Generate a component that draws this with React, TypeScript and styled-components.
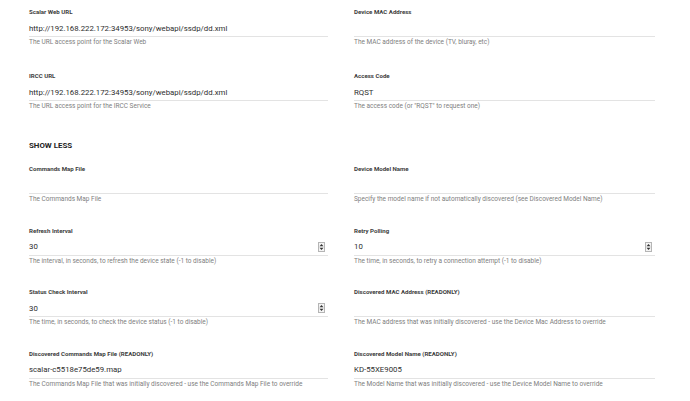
import React from "react";
import styled, { createGlobalStyle } from "styled-components";

const Global = createGlobalStyle`
  html, body { margin: 0; padding: 0; background: #fff; }
  body { font-family: Roboto, "Liberation Sans", Arial, sans-serif; color: #333; }
`;

const Page = styled.div`
  padding: 7px 0 0 29px;
  width: 661px;
  box-sizing: border-box;
`;

const Grid = styled.div<{ $rowGap: number }>`
  display: grid;
  grid-template-columns: 299px 301px;
  column-gap: 26px;
  row-gap: ${(p) => p.$rowGap}px;
`;

const Field = styled.div`
  display: flex;
  flex-direction: column;
`;

const Label = styled.div`
  font-size: 6.1px;
  font-weight: 700;
  line-height: 10px;
  height: 10px;
  color: #3d3d3d;
  white-space: nowrap;
`;

const InputRow = styled.div`
  display: flex;
  align-items: center;
  padding-top: 3px;
  box-sizing: border-box;
  border-bottom: 1px solid #e3e3e3;
  height: 20px;
`;

const Value = styled.div`
  flex: 1;
  font-size: 7.8px;
  line-height: 15px;
  color: #2e2e2e;
  white-space: nowrap;
`;

const Help = styled.div`
  margin-top: 1px;
  font-size: 6.5px;
  line-height: 9px;
  color: #808080;
  white-space: nowrap;
`;

const SpinBox = styled.span`
  display: inline-flex;
  width: 7px;
  height: 10px;
  margin-right: 3px;
`;

const ShowLess = styled.div`
  margin: 30px 0 13px;
  font-size: 7.9px;
  font-weight: 700;
  line-height: 10px;
  color: #222;
`;

const Spinner = () => (
  <SpinBox>
    <svg width="7" height="10" viewBox="0 0 7 10">
      <rect x="0.5" y="0.5" width="6" height="9" fill="#f4f4f4" stroke="#b5b5b5" />
      <path d="M3.5 2 L5.5 4.3 H1.5 Z" fill="#333" />
      <path d="M3.5 8 L5.5 5.7 H1.5 Z" fill="#333" />
    </svg>
  </SpinBox>
);

type F = { label: string; value?: string; help: string; spin?: boolean };

const FieldView = ({ label, value, help, spin }: F) => (
  <Field>
    <Label>{label}</Label>
    <InputRow>
      <Value>{value ?? ""}</Value>
      {spin && <Spinner />}
    </InputRow>
    <Help>{help}</Help>
  </Field>
);

const top: F[] = [
  { label: "Scalar Web URL", value: "http://192.168.222.172:34953/sony/webapi/ssdp/dd.xml", help: "The URL access point for the Scalar Web" },
  { label: "Device MAC Address", help: "The MAC address of the device (TV, bluray, etc)" },
  { label: "IRCC URL", value: "http://192.168.222.172:34953/sony/webapi/ssdp/dd.xml", help: "The URL access point for the IRCC Service" },
  { label: "Access Code", value: "RQST", help: "The access code (or \"RQST\" to request one)" },
];

const more: F[] = [
  { label: "Commands Map File", help: "The Commands Map File" },
  { label: "Device Model Name", help: "Specify the model name if not automatically discovered (see Discovered Model Name)" },
  { label: "Refresh Interval", value: "30", spin: true, help: "The interval, in seconds, to refresh the device state (-1 to disable)" },
  { label: "Retry Polling", value: "10", spin: true, help: "The time, in seconds, to retry a connection attempt (-1 to disable)" },
  { label: "Status Check Interval", value: "30", spin: true, help: "The time, in seconds, to check the device status (-1 to disable)" },
  { label: "Discovered MAC Address (READONLY)", help: "The MAC address that was initially discovered - use the Device Mac Address to override" },
  { label: "Discovered Commands Map File (READONLY)", value: "scalar-c5518e75de59.map", help: "The Commands Map File that was initially discovered - use the Commands Map File to override" },
  { label: "Discovered Model Name (READONLY)", value: "KD-55XE9005", help: "The Model Name that was initially discovered - use the Device Model Name to override" },
];

export default function App() {
  return (
    <>
      <Global />
      <Page>
        <Grid $rowGap={24}>
          {top.map((f) => (
            <FieldView key={f.label} {...f} />
          ))}
        </Grid>
        <ShowLess>SHOW LESS</ShowLess>
        <Grid $rowGap={21.5}>
          {more.map((f) => (
            <FieldView key={f.label} {...f} />
          ))}
        </Grid>
      </Page>
    </>
  );
}
